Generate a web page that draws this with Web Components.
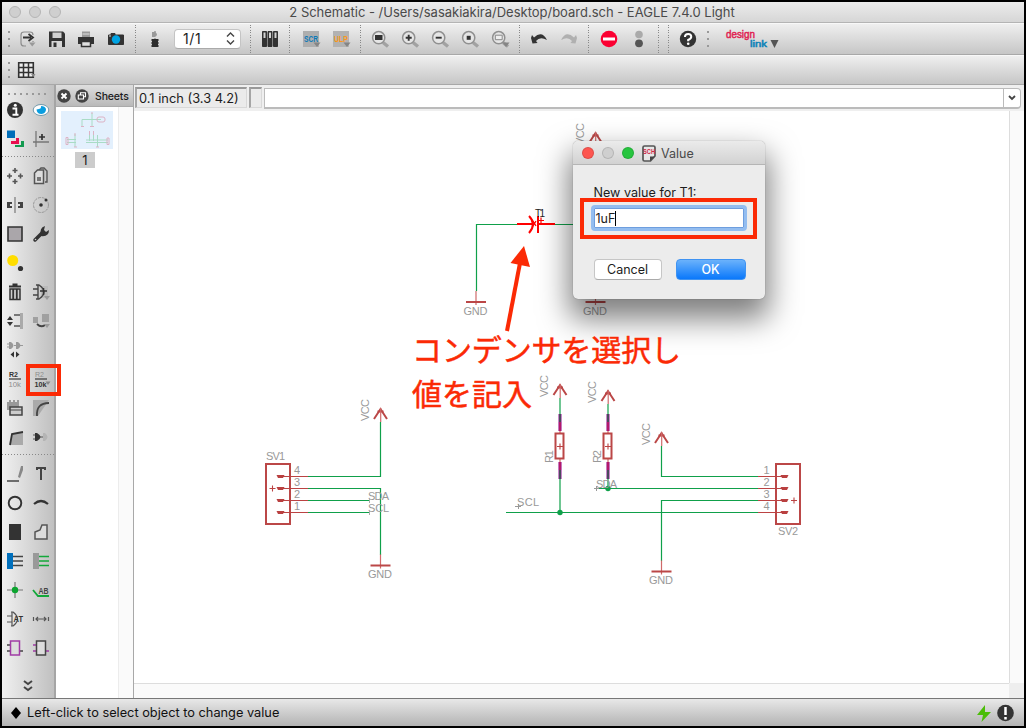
<!DOCTYPE html>
<html lang="ja">
<head>
<meta charset="utf-8">
<title>2 Schematic - EAGLE 7.4.0 Light</title>
<style>
html,body{margin:0;padding:0;background:#000}
body{font-family:Inter,Roboto,"Noto Sans CJK JP",sans-serif;color:#1c1c1c}
</style>
</head>
<body>
<eagle-window></eagle-window>
<script>
const D='#333', G='#999';
const lens=(inner,extra='')=>`<path d="M3 3.5L8 7.5" stroke="#a2a2a2" stroke-width="3.4"/><circle cx="-1.3" cy="-1.3" r="6.1" fill="#e6e6e6" stroke="#909090" stroke-width="1.5"/>${inner}${extra}`;
const tri='<path d="M2.500 3.5H9.500L6 8Z" fill="#858585"/>';
const plus=(x,y)=>`<path d="M${x-2.5} ${y}h5M${x} ${y-2.5}v5" stroke="#555" stroke-width="1.6"/>`;
const txt=(s,x,y,size,fill,len,w=700)=>`<text x="${x}" y="${y}" font-size="${size}" fill="${fill}" font-weight="${w}" textLength="${len}" lengthAdjust="spacingAndGlyphs">${s}</text>`;
const ICONS={
 open:`<path d="M-1 7H-3Q-6 7-6 4V-4Q-6-7-3-7H3Q6-7 6-4M6 2V3" fill="none" stroke="#8d8d8d" stroke-width="1.2"/><path d="M-4-1.5H4M1.5-5L6-1.5L1.5 2" fill="none" stroke="${D}" stroke-width="1.8"/><path d="M2 3.5H8.500L5.200 7.500Z" fill="#999"/>`,
 save:`<path d="M-8-7.500H6L8-5.500V8H-8Z" fill="${D}"/><path d="M-4.500-6.500H4.500V-1H-4.500Z" fill="#d0d0d0"/><path d="M-5.500 2H5V8H-5.500Z" fill="#d8d8d8"/><path d="M-3.500 3.500H-.5V8H-3.500Z" fill="${D}"/>`,
 print:`<path d="M-4-7.500H4V-2H-4Z" fill="#999"/><path d="M-3.500-5H3.500" stroke="#ddd"/><path d="M-8-2H8V5H-8Z" fill="${D}"/><path d="M-4.500 2.500H4.500V7.500H-4.500Z" fill="#e0e0e0" stroke="${D}" stroke-width="1.500"/>`,
 camera:`<path d="M-7.500-4H-5V-5.500H-1V-4H7.500V5.500H-7.500Z" fill="${D}" stroke="${D}" stroke-linejoin="round"/><circle r="4.200" cy=".5" fill="#00a4e4"/><path d="M-7-3h2" stroke="#ddd"/>`,
 toboard:`<path d="M0-8V-5M0-1V1" stroke="#999" stroke-width="1.500"/><path d="M-3-7H0Q4-4.500 0-2H-3Z" fill="#999"/><path d="M-3.500 0H3.500V2H3V3H3.500V5H3V6H3.500V8H-3.500V6H-3V5H-3.500V3H-3V2H-3.500Z" fill="#2c2c2c"/>`,
 library:`<path d="M-7.500-7.500H-3.500V7.500H-7.500ZM-2-7.500H2V7.500H-2ZM3.500-7.500H7.500V7.500H3.500Z" fill="${D}" stroke="${D}"/><path d="M-6.500-6.500h2v5.500h-2ZM-1-6.500h2v5.500h-2ZM4.500-6.500h2v5.500h-2Z" fill="#d4d4d4"/>`,
 scr:`<path d="M-8-8H8V8H-8Z" fill="#aeaeae"/>${tri}${txt('SCR',-7,3,9.500,'#0b79b8',14)}`,
 ulp:`<path d="M-8-8H8V8H-8Z" fill="#b2b2b2"/>${tri}${txt('ULP',-7,3,9.500,'#f8981d',14)}`,
 zfit:lens(`<path d="M-5-4H2.500V1H-5Z" fill="${D}"/>`),
 zin:lens(`<path d="M-4.300-1.300H1.700M-1.300-4.300V1.700" stroke="${D}" stroke-width="1.900"/>`),
 zout:lens(`<path d="M-4.300-1.300H1.700" stroke="${D}" stroke-width="1.900"/>`),
 zredraw:lens(`<path d="M-3.300-3.200H.7V.8H-3.300Z" fill="${D}"/>`),
 zsel:lens(`<path d="M-4.700-3.800H2.200V.7H-4.700Z" fill="#eee" stroke="#888"/>`,tri),
 undo:`<path d="M-8-1L-6.500 4.500L-1.500 4L-3 2Q1-3 8 1Q3-9-5-1.500L-7-4Z" fill="${D}"/>`,
 redo:`<path d="M8-1L6.500 4.500L1.500 4L3 2Q-1-3-8 1Q-3-9 5-1.500L7-4Z" fill="#b0b0b0"/>`,
 stop:`<circle r="8.300" fill="#fb0032"/><path d="M-6 0H6" stroke="#fff" stroke-width="3"/>`,
 go:`<circle cy="-4.500" r="3.800" fill="#aaa"/><circle cy="4.300" r="3.900" fill="#555"/>`,
 help:`<circle r="8.200" fill="${D}"/><path d="M-3-2Q-3-5 .2-5Q3.300-5 3.200-2.300Q3.200-.5.200 1V2.200" fill="none" stroke="#fff" stroke-width="2.100"/><circle cx=".2" cy="4.800" r="1.300" fill="#fff"/>`,
 grid:`<path d="M-7.300-7.300H7.300V7.300H-7.300Z" fill="#eee" stroke="${D}" stroke-width="1.600"/><path d="M-2.500-8V8M2.500-8V8M-8-2.500H8M-8 2.500H8" stroke="${D}" stroke-width="1.500"/><path d="M5 4H9.500L7.500 7Z" fill="#888"/>`,
 info:`<circle r="8" fill="${D}"/><path d="M-2.500-1.500H1.300V4.500M-2.500 4.800H3.500" fill="none" stroke="#fff" stroke-width="1.900"/><circle cx=".3" cy="-4.700" r="1.500" fill="#fff"/>`,
 show:`<ellipse rx="7.800" ry="5.500" fill="#fff" stroke="#7399aa"/><path d="M-4.500-.5Q-4 4 .5 4Q5 3.500 5-1Q4-4 0-4Q1-1-4.500-.5Z" fill="#0a9ddf"/>`,
 layers:`<path d="M-8-8.500H0V-1H-8Z" fill="#006eb9"/><path d="M1-1H4V5H-4V2H1Z" fill="#e8104e"/><path d="M6 2H9V8H0V6H6Z" fill="#139a50"/>`,
 mark:`<path d="M-5-8V8M-8 3H8" stroke="#777" stroke-width="1.300"/><path d="M-2-2H4M1-5V1" stroke="${D}" stroke-width="1.700"/>`,
 move:plus(0,-5.500)+plus(-5.500,0)+plus(5.500,0)+plus(0,5.500),
 copy:`<path d="M-3-5L0-8H3L6-5V6H4" fill="none" stroke="#555" stroke-width="1.400"/><path d="M-6.500-3L-3.500-6H2.500V7.500H-6.500Z" fill="#ddd" stroke="#555" stroke-width="1.500"/><path d="M-4 1H0V5H-4Z" fill="#777"/>`,
 mirror:`<path d="M0-8V8" stroke="#888" stroke-width="1.400"/><path d="M-8-3H-3V-1H-5V1H-3V3H-8ZM8-3H3V-1H5V1H3V3H8Z" fill="#444"/>`,
 rotate:`<circle r="7.500" fill="none" stroke="#999" stroke-dasharray="3 1"/><circle r="1.800" fill="${D}"/><circle cx="5" cy="-5" r="1.500" fill="${D}"/>`,
 group:`<path d="M-7-7H7V7H-7Z" fill="#aaa6aa" stroke="#333" stroke-width="1.600"/>`,
 wrench:`<path d="M-6 6L1-1" stroke="${D}" stroke-width="3.500" stroke-linecap="round"/><path d="M0 1Q-2-6 4-8L3-4L5-2L8-4Q8 3 0 2Z" fill="${D}"/><circle cx="-5.500" cy="5.500" r=".8" fill="#ccc"/>`,
 replicate:`<circle cx="-2.300" cy="-2.500" r="5.500" fill="#ffdd00"/><circle cx="5.500" cy="5.500" r="2.600" fill="${D}"/>`,
 trash:`<path d="M-6-5.500H6M-2.500-7.500H2.500" stroke="${D}" stroke-width="2"/><path d="M-5-3H5V7.500H-5Z" fill="#ccc" stroke="${D}" stroke-width="1.500"/><path d="M-1.800-3V8M1.800-3V8" stroke="${D}" stroke-width="1.800"/>`,
 add:`<path d="M0-6H7V6H0Z" fill="#bbb"/><path d="M-8-3H-3M-8 3H-3M-3-7V7M-5-7H-2Q8 0-2 7H-5" fill="none" stroke="#444" stroke-width="1.400"/><path d="M-1-1H6M2.500-4V3" stroke="#333" stroke-width="1.500"/><path d="M3 4H9L6 8Z" fill="#999"/>`,
 pinswap:`<path d="M-8-1L-5-5L-2-1ZM-8 1L-5 5L-2 1Z" fill="#333"/><path d="M5-8H8V8H5Z" fill="#aaa"/><path d="M-1-6H5M-1 5H5" stroke="#777" stroke-width="1.800"/>`,
 replace:`<path d="M-8-4H-3V2H-8ZM1-7H8V1H1Z" fill="#a0a0a0"/><path d="M-4 3Q0 7 4 4" fill="none" stroke="#444" stroke-width="1.800"/><path d="M3 3H9L6 7Z" fill="#999"/>`,
 gateswap:`<path d="M-8-6h3M-8-3h3M-1-4.500h3M5-4.500h3" stroke="#999"/><path d="M-6-8H-4Q1-4.500-4-1H-6ZM1-8H3Q8-4.500 3-1H1Z" fill="#999"/><path d="M-1 1.500V7.500L-4.500 4.500ZM1 1.500V7.500L4.500 4.500Z" fill="#333"/>`,
 name:txt('R2',-6,-2,8,'#333',9)+`<path d="M-6 0H6" stroke="#444" stroke-width="1.300"/>`+txt('10k',-6.500,8,8,'#8d8d8d',12.500,400),
 value:txt('R2',-6,-2,8,'#8d8d8d',9,400)+`<path d="M-6 0H6" stroke="#444" stroke-width="1.300"/>`+txt('10k',-6.500,8,8,'#333',12)+`<path d="M4.500 2.500H9.500L7 6Z" fill="#888"/>`,
 smash:`<path d="M-8-6H-6V-8H-4V-6H-2V-8H0V-6H2V-8H4V2H-8Z" fill="#999"/><path d="M-5-1H7V7H-5Z" fill="#ccc" stroke="#444" stroke-width="1.500"/><path d="M-5 2H7" stroke="#444"/>`,
 miter:`<path d="M-8-8H8L-3 8H-8Z" fill="#aaa"/><path d="M-4 8Q-5-5 8-5" fill="none" stroke="#444" stroke-width="1.800"/>`,
 split:`<path d="M-3-3L8-5V8H-5Z" fill="#aaa"/><path d="M-5 8L-3-3L8-5" fill="none" stroke="#333" stroke-width="1.800"/>`,
 invoke:`<path d="M-8-2h3M-8 2h3M-1 0h3" stroke="#555"/><path d="M-6-4H-4Q3 0-4 4H-6Z" fill="#333"/><path d="M2-4H4Q9 0 4 4H2Z" fill="#b5b5b5"/>`,
 line:`<path d="M-8 7H4" stroke="#444" stroke-width="1.500"/><path d="M3 3L6-8H8V-4L5 4Z" fill="#888"/>`,
 text:`<path d="M-4-4V-6H4V-4M0-6V6" fill="none" stroke="#444" stroke-width="2"/>`,
 circle:`<circle r="6.300" fill="none" stroke="#333" stroke-width="1.900"/>`,
 arc:`<path d="M-7 1Q0-5 7 1" fill="none" stroke="#333" stroke-width="2.200"/>`,
 rect:`<path d="M-6-8H6V8H-6Z" fill="#333"/>`,
 polygon:`<path d="M-6 7V0L-1-2L1-7H6V7Z" fill="#ddd" stroke="#555" stroke-width="1.500"/>`,
 bus:`<path d="M-8-8H-2V8H-8Z" fill="#0070bd"/><path d="M-2-4.500H8M-2 0H8M-2 4.500H8" stroke="#444" stroke-width="1.300"/>`,
 net:`<path d="M-8-8H-2V8H-8Z" fill="#999"/><path d="M-2-4.500H8M-2 0H8M-2 4.500H8" stroke="#13a83a" stroke-width="1.500"/>`,
 junction:`<path d="M-8 0H8M0-8V8" stroke="#777" stroke-width="1.200"/><circle r="3.200" fill="#0ca42f"/>`,
 label:`<path d="M-8 0L-3 6H8" fill="none" stroke="#13a83a" stroke-width="1.800"/>`+txt('AB',-2.500,4,9,'#444',10),
 attribute:`<path d="M-8-3H-3M-8 3H-3M-3-7V7M-4-7H-2Q7 0-2 7H-4" fill="none" stroke="#555" stroke-width="1.200"/>`+txt('AT',-1.500,3,8.500,'#333',9.500),
 dimension:`<path d="M-7.500-2V2M7.500-2V2M-5 0H5M-3-2L-5 0L-3 2M3-2L5 0L3 2" fill="none" stroke="#555" stroke-width="1.200"/>`,
 module:`<path d="M-8-3H-5M-8 3H-5M5 3H8" stroke="#444" stroke-width="1.500"/><path d="M-4.500-7H4.500V7H-4.500Z" fill="#ddd" stroke="#a03ba5" stroke-width="1.500"/>`,
 port:`<path d="M-8-3H-5M-8 3H-5M5 3H8" stroke="#a03ba5" stroke-width="1.500"/><path d="M-4.500-7H4.500V7H-4.500Z" fill="#ddd" stroke="#444" stroke-width="1.500"/>`,
 more:`<path d="M-4-5L0-2L4-5M-4 1L0 4L4 1" fill="none" stroke="#444" stroke-width="2"/>`,
 none:''
};
const define=(name,html,setup)=>customElements.define(name,class extends HTMLElement{
 constructor(){super();this.attachShadow({mode:'open'});}
 connectedCallback(){this.shadowRoot.innerHTML=typeof html==='function'?html(this):html;if(setup)setup(this);}
});

define('tool-icon',el=>`<style>:host{display:block;flex:none;width:30px;height:30px}svg{display:block;width:30px;height:30px}text{font-family:"Liberation Sans",sans-serif}</style>
<svg viewBox="-15 -15 30 30">${ICONS[el.getAttribute('name')]||''}</svg>`);

define('tool-sep',`<style>:host{display:block;flex:none;width:1px;height:28px;margin:0 4px;background:repeating-linear-gradient(#888 0 1px,transparent 1px 2.500px)}</style>`);
define('tool-grip',`<style>:host{display:flex;flex:none;flex-direction:column;gap:5px;width:2px;padding:0 4px}i{width:2px;height:2px;background:#999}</style><i></i><i></i><i></i>`);

define('title-bar',`<style>:host{display:grid;grid-template-columns:62px 1fr 62px;align-items:center;height:20px;background:linear-gradient(#ececec,#d6d6d6);border-bottom:1px solid #b4b4b4;font-size:13px;letter-spacing:-.01px;color:#4a4a4a}
.l{display:flex;gap:8px;padding-left:7px}.l i{width:10px;height:10px;border:1px solid #b5b5b5;border-radius:50%;background:#cfcfcf}
.t{text-align:center;white-space:nowrap;margin-right:2px}</style><div class="l"><i></i><i></i><i></i></div><div class="t"><slot></slot></div>`);

define('tool-bar',`<style>:host{display:flex;align-items:center;box-sizing:border-box;height:32px;padding-left:2px;background:linear-gradient(#efefef,#c6c6c6);border-top:1px solid #f8f8f8;border-bottom:1px solid #a8a8a8}</style><slot></slot>`);

define('sheet-select',`<style>:host{display:flex;justify-content:space-between;align-items:center;box-sizing:border-box;width:67px;height:20px;margin:0 5px 1px 4px;padding:0 5px 0 8px;border-radius:4px;background:#fff;border:1px solid #c4c4c4;border-bottom-color:#aaa;font-size:14px;letter-spacing:.6px}</style><span><slot></slot></span>
<svg width="9" height="13" viewBox="0 0 9 13" fill="none" stroke="#444" stroke-width="1.400"><path d="M1 4.500L4.500 1L8 4.500M1 8.500L4.500 12L8 8.500"/></svg>`);

define('design-link',`<style>:host{display:block;width:56px;height:24px;margin-left:11px}svg{display:block}text{font-family:"Liberation Sans",sans-serif;font-weight:400;stroke-width:.5px}</style>
<svg width="56" height="24" viewBox="724 28 56 24"><text x="726" y="38.500" font-size="11" fill="#e01f52" stroke="#e01f52" textLength="29" lengthAdjust="spacingAndGlyphs">design</text><text x="750" y="48" font-size="8.500" font-weight="700" fill="#1183b8" stroke="#1183b8" textLength="17" lengthAdjust="spacingAndGlyphs">link</text><path d="M770.500 41H778.500L774.500 49Z" fill="#555"/></svg>`);

const L=n=>`<tool-icon name="${n}"></tool-icon>`;
define('tool-palette',`<style>:host{display:flex;flex-direction:column;box-sizing:border-box;width:54px;height:613px;background:linear-gradient(90deg,#f0f0f0,#c0c0c0);border-right:2px solid #a5a5a5}
:host>*{flex:none}.grip{flex:none;height:2px;margin:8px 8px 0 6px;background:repeating-linear-gradient(90deg,#999 0 2px,transparent 2px 6px)}
.g{display:grid;flex:none;grid-template-columns:26px 26px;grid-auto-rows:29px}.g tool-icon{margin-left:-2px}
.s{flex:none;height:1px;background:repeating-linear-gradient(90deg,#888 0 1px,transparent 1px 3px)}
.m{display:block;margin:9px 0 -20px 11px}</style>
<div class="grip"></div><div class="g">${['info','show','layers','mark'].map(L).join('')}</div>
<div class="s" style="margin:3px 0 4px"></div>
<div class="g">${['move','copy','mirror','rotate','group','wrench','replicate','none','trash','add','pinswap','replace','gateswap','none','name','value','smash','miter','split','invoke'].map(L).join('')}</div>
<div class="s" style="margin:3px 0 4px"></div>
<div class="g">${['line','text','circle','arc','rect','polygon','bus','net','junction','label','attribute','dimension','module','port'].map(L).join('')}</div>
<tool-icon class="m" name="more"></tool-icon>`);

define('sheets-panel',`<style>:host{display:flex;flex-direction:column;width:78px;height:613px;background:#fff;border-right:1px solid #a8a8a8}
header{display:flex;align-items:center;gap:4px;height:21px;padding-left:1px;background:linear-gradient(#dedede,#b9b9b9);border-bottom:1px solid #aaa;font-size:10.500px;font-weight:500;letter-spacing:-.15px}
header span{margin-left:2px;padding-top:1px}.b{display:flex;flex:1;justify-content:space-between}.c{display:flex;flex-direction:column;padding:4px 0 0 5px}
.n{width:20px;height:16px;margin:3px 0 0 14px;background:#ccc;text-align:center;font-size:13px;line-height:16px}.sb{width:14px;background:#fafafa;border-left:1px solid #ececec}</style>
<header><svg width="14" height="14" viewBox="-7 -7 14 14"><circle r="6.700" fill="#444"/><path d="M-2.500-2.500L2.500 2.500M2.500-2.500L-2.500 2.500" stroke="#fff" stroke-width="2"/></svg>
<svg width="14" height="14" viewBox="-7 -7 14 14"><circle r="6.700" fill="#444"/><path d="M-1.500-1V-3.200H3.500V.8H2M-3.700-1H1.500V3H-3.700Z" fill="none" stroke="#fff" stroke-width="1.100"/></svg><span>Sheets</span></header>
<div class="b"><div class="c"><svg width="52" height="38" viewBox="61 111 52 38"><path d="M61 111h52v38H61z" fill="#e3f0fd"/><g fill="none" stroke="#a9dcc6"><path d="M82 126V119.500H101M92 113V127M75 134V147M67 139.500H76M67 142.500H76M86 142.500H108M86 140H108M89.500 132V141M93.500 132V141M97.500 135V147"/></g><g fill="none" stroke="#dcb3c5"><rect x="97" y="117" width="8" height="5" rx="2"/><path d="M66 137.500V144.500H68V137.500ZM107 138V144.500H109V138ZM81 126.500H84M90 126.500H94M74 147H77M96 147H99M92 112V114M75 133V136M89.500 131V135M93.500 131V135"/></g></svg><div class="n">1</div></div><div class="sb"></div></div>`);

define('command-bar',`<style>:host{display:flex;box-sizing:border-box;height:26px;padding:2px 3px 3px 1px;background:#efefef;font-size:12.850px}
.x{box-sizing:border-box;height:21px;border:1px solid #d8d8d8;border-top:2px solid #999;border-left:2px solid #a5a5a5;background:#ebebeb;white-space:nowrap}
.a{width:112px;padding:1px 0 0 2px;line-height:18px}.b{width:13px;margin-left:2px}
.f{display:flex;flex:1;justify-content:flex-end;box-sizing:border-box;height:21px;margin:1px 0 0 2px;border:1px solid #bbb;border-width:1px 1px 2px;border-radius:0 4px 4px 0;background:#fff}.d{display:flex;align-items:center;justify-content:center;width:16px;border-left:1px solid #bbb}</style>
<div class="x a"><slot></slot></div><div class="x b"></div><div class="f"><div class="d"><svg width="8" height="6" viewBox="0 0 8 6"><path d="M1 1L4 4L7 1" fill="none" stroke="#444" stroke-width="1.800"/></svg></div></div>`);

const vcc=(x,y,len,tx,ty)=>`<path class="r2" d="M${x-6.500} ${y+11}L${x} ${y+1}L${x+6.500} ${y+11}"/><path class="r2" d="M${x-3} ${y+3.500}H${x+3}"/><path class="p" d="M${x+.2} ${y}V${y+14}"/><text transform="translate(${tx} ${ty}) rotate(-90)" textLength="22">VCC</text>`;
const gnd=(x,y)=>`<path class="p" d="M${x} ${y-11}V${y+3}"/><path class="r2" d="M${x-10} ${y}H${x+10}"/><text x="${x-12.500}" y="${y+12.500}" textLength="24">GND</text>`;
const res=(x,n,s)=>`<path d="M${x} ${s}V414" class="g"/><path d="M${x} 414V431M${x} 462V479" stroke="#b55fb8" stroke-width="3.500"/><path d="M${x} 414V422M${x} 470V479" stroke="#4a4b5c" stroke-width="2"/><path d="M${x} 422V431M${x} 462V470" stroke="#b3186a" stroke-width="2.200"/><path class="p" d="M${x} 431V434M${x} 459V462"/><path class="r2" d="M${x-4.500} 433.500H${x+3.500}V458.500H${x-4.500}Z"/><path class="r" d="M${x-3} 446.500H${x+3}M${x} 443.500V449.500"/><text transform="translate(${x-7.500} 463) rotate(-90)" textLength="13">${n}</text>`;
const pin=(x,y)=>`<path d="M${x-4} ${y-1.500}H${x+4}L${x+2.500} ${y+1.500}H${x-2.500}Z" fill="#b94040"/>`;
define('schematic-canvas',`<style>:host{display:grid;grid-template:572px 15px/875px 15px;background:#fafafa}svg{display:block;background:#fff}text{font:11px "Liberation Sans",sans-serif;fill:#999}
.v{border-left:1px solid #ddd}.h{border-top:1px solid #ddd}.c{background:#eee}
.g{fill:none;stroke:#0fa04a;stroke-width:1.200}.r{fill:none;stroke:#bb4343;stroke-width:1.100}.r2{fill:none;stroke:#bb4747;stroke-width:2}.p{fill:none;stroke:#cf6a6a;stroke-width:1.200}</style>
<svg width="875" height="572" viewBox="134 111 875 572">
<path class="g" d="M476.500 291V224.500H517M555 224.500H596V291"/>
${gnd(476,302)}${gnd(595.500,302)}${vcc(595.500,132,0,583.500,145)}
<g fill="none" stroke="#f00" stroke-width="2"><path d="M517 224H532M538 224H555M538 216V233M529 216Q537 224 529 233"/><path d="M533 221L536 226M536 221L533 226" stroke-width="1.300"/><path d="M538 220.500H544M541 217.500V223.500" stroke-width="1.200"/></g>
<text x="535" y="217" textLength="10" style="fill:#222;font-size:10px">T1</text>
${vcc(380.500,408,0,368.500,421)}<path class="g" d="M308 476.500H380.500V422M308 488.500H380.500V555M308 500.500H370M308 512.500H370"/>${gnd(380.500,565.500)}
<path class="r2" d="M266 464H290V524H266Z"/><path class="r" d="M280 476.500H308M280 488.500H308M280 500.500H308M280 512.500H308M269.500 488.500H275.500M272.500 485.500V491.500"/>
${[476.5,488.5,500.5,512.5].map(y=>pin(280.500,y)).join('')}
<text x="266" y="460" textLength="19">SV1</text><text x="294" y="474">4</text><text x="294" y="486">3</text><text x="294" y="498">2</text><text x="294" y="510">1</text>
<text x="368" y="500" textLength="21">SDA</text><text x="368" y="512" textLength="21">SCL</text><path d="M369.500 499V503M369.500 511V515" stroke="#aaa"/>
${vcc(560,384,0,548,397)}${vcc(608,390,0,596,403)}${vcc(661.500,432,0,649.500,445)}
${res(560,'R1',398)}${res(608,'R2',404)}
<path class="g" d="M560 479V512.500M608 479V488.500M595 488.500H758M506 512.500H758M661.500 446V476.500H758M661.500 561V500.500H758"/><circle cx="560" cy="512.500" r="2.700" fill="#0fa04a"/><circle cx="608" cy="488.500" r="2.700" fill="#0fa04a"/>
${gnd(661.500,571.500)}
<text x="596" y="488" textLength="21">SDA</text><text x="517" y="506" textLength="22">SCL</text><path d="M594 488.500H599M596.500 486V491M515 506.500H521M518.500 504V509" stroke="#999"/>
<path class="r2" d="M776 464H800V524H776Z"/><path class="r" d="M758 476.500H785M758 488.500H785M758 500.500H785M758 512.500H785M791 500.500H797M794 497.500V503.500"/>
${[476.5,488.5,500.5,512.5].map(y=>pin(784.500,y)).join('')}
<text x="763.500" y="474">1</text><text x="763.500" y="486">2</text><text x="763.500" y="498">3</text><text x="763.500" y="510">4</text><text x="778" y="535" textLength="20">SV2</text>
</svg><div class="v"></div><div class="h"></div><div class="c"></div>`);

define('value-dialog',`<style>:host{position:absolute;left:573px;top:141px;width:192px;height:158px;border-radius:5px;background:#ececec;box-shadow:0 0 1px rgba(0,0,0,.5),0 16px 30px 4px rgba(0,0,0,.5);overflow:visible;font-size:12.500px}
header{display:flex;align-items:center;gap:8px;box-sizing:border-box;height:24px;padding:1px 0 0 9px;border-radius:5px 5px 0 0;background:linear-gradient(#ebebeb,#d2d2d2);border-bottom:1px solid #b5b5b5;color:#4a4a4a}
header i{box-sizing:border-box;width:12px;height:12px;border-radius:50%;border:1px solid rgba(0,0,0,.12)}header span{margin-left:-3px}
.b{display:flex;flex-direction:column;padding:19px 19px 0 20.500px}label{line-height:18px;height:21px;font-size:12.600px}
.in{display:flex;align-items:center;box-sizing:border-box;width:156px;height:26px;margin-left:-3px;border:3px solid #93bdf0;border-radius:4px;background:#fff;box-shadow:inset 0 0 0 1px #6e9ede;padding-left:2px;letter-spacing:0}.in i{width:1px;height:15px;background:#000}
.bs{display:flex;gap:15px;margin-top:28px}.bt{box-sizing:border-box;width:68px;height:21px;line-height:19px;border-radius:4px;text-align:center;background:#fff;border:1px solid #c6c6c6;border-bottom-color:#aaa}.ok{width:70px;margin-left:-1px;color:#fff;border-color:#3f93f2;background:linear-gradient(#6bb2fb,#0a78fb);font-weight:500}</style>
<header><i style="background:#fd5650"></i><i style="background:#cfcfcf"></i><i style="background:#27c53f"></i><svg width="14" height="17" viewBox="0 0 14 17"><path d="M2.500 1H11.500Q13 1 13 2.500V11L8.500 16H2.500Q1 16 1 14.500V2.500Q1 1 2.500 1Z" fill="#e7e7e7" stroke="#555" stroke-width="1.700"/><path d="M8 16V11.500H13Z" fill="#444"/><text x="1" y="9" font-family="Liberation Sans" font-size="6.500" font-weight="700" fill="#cf2748" textLength="12" lengthAdjust="spacingAndGlyphs">SCH</text></svg><span>Value</span></header>
<div class="b"><label>New value for T1:</label><div class="in">1uF<i></i></div><div class="bs"><div class="bt">Cancel</div><div class="bt ok">OK</div></div></div>`);

define('callout-layer',`<style>:host{position:absolute;inset:0;pointer-events:none}svg{display:block}text{font:400 30px "Noto Sans CJK JP",sans-serif;fill:#fb2a05;stroke:#fb2a05;stroke-width:.5px}</style>
<svg width="1026" height="728"><g fill="none" stroke="#fb2a05" stroke-width="4"><path d="M28 366H59V394H28Z"/><path d="M582 200H755V237H582Z"/><path d="M507 331L520 263"/></g><path d="M524 246L510.500 263L530 267Z" fill="#fb2a05"/>
<text x="412" y="360.500" textLength="269">コンデンサを選択し</text><text x="412" y="405" textLength="120">値を記入</text></svg>`);

define('status-bar',`<style>:host{display:flex;align-items:center;box-sizing:border-box;height:28px;padding:0 10px 0 8px;background:linear-gradient(#e8e8e8,#b3b3b3);border-top:1px solid #777;font-size:12.770px;color:#111}span{flex:1;padding-left:5px}</style>
<svg width="12" height="14" viewBox="0 0 12 14"><path d="M6 1L11 7L6 13L1 7Z" fill="#000"/></svg><span><slot></slot></span>
<svg width="38" height="20" viewBox="976 702 38 20"><path d="M985 704L977 714H983L981.500 721L991 711H985Z" fill="#4bbd08"/><circle cx="1005.500" cy="712" r="8.300" fill="#333"/><path d="M1005.500 706V714M1005.500 716V718.500" stroke="#fff" stroke-width="2.500"/></svg>`);

define('eagle-window',`<style>:host{display:flex;flex-direction:column;position:relative;box-sizing:border-box;width:1026px;height:728px;border:2px solid #000;background:#ededed;overflow:hidden}
.m{display:flex;height:613px}.w{flex:1}.over{position:absolute;inset:-2px}.gap{flex:none;width:2px}.files{display:flex;width:119px;margin-left:-2px}.files tool-icon{width:29.700px}</style>
<title-bar>2 Schematic - /Users/sasakiakira/Desktop/board.sch - EAGLE 7.4.0 Light</title-bar>
<tool-bar><tool-grip></tool-grip><div class="files">${['open','save','print','camera'].map(L).join('')}</div><tool-sep></tool-sep>${L('toboard')}<sheet-select>1/1</sheet-select><tool-sep></tool-sep>${L('library')}<tool-sep></tool-sep><div class="gap"></div>${L('scr')+L('ulp')}<tool-sep></tool-sep>${['zfit','zin','zout','zredraw','zsel'].map(L).join('')}<tool-sep></tool-sep>${L('undo')+L('redo')}<tool-sep></tool-sep><div style="width:1px"></div>${L('stop')+L('go')}<tool-sep></tool-sep><tool-sep style="margin-left:5px"></tool-sep>${L('help')}<tool-grip></tool-grip><design-link></design-link></tool-bar>
<tool-bar style="height:30px"><tool-grip></tool-grip><tool-icon name="grid" style="margin-left:-3px"></tool-icon></tool-bar>
<div class="m"><tool-palette></tool-palette><sheets-panel></sheets-panel><div class="w"><command-bar>0.1 inch (3.3 4.2)</command-bar><schematic-canvas></schematic-canvas></div></div>
<status-bar>Left-click to select object to change value</status-bar>
<div class="over"><value-dialog></value-dialog><callout-layer></callout-layer></div>`);
</script>
</body>
</html>
